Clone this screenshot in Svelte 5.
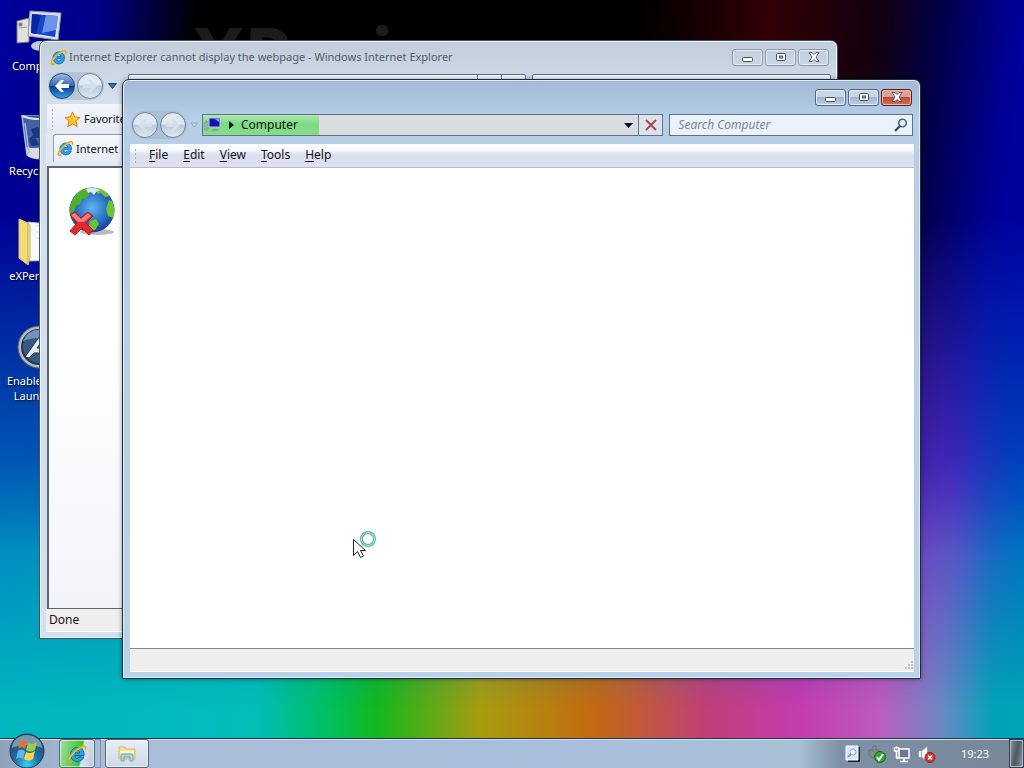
<script>
  let address = $state("Computer");
  let query = $state("");

  const shortcuts = [
    { icon: "computer", label: "Computer" },
    { icon: "bin", label: "Recycle Bin" },
    { icon: "folder", label: "eXPerience" },
    { icon: "launcher", label: "Enable Auto Launcher" },
  ];
  const menus = ["File", "Edit", "View", "Tools", "Help"];
</script>

{#snippet ieLogo(size)}
  <svg width={size} height={size} viewBox="0 0 16 16" aria-hidden="true">
    <path d="M13.500 10.300c-.8 2.300-2.700 3.700-5.200 3.700-3.300 0-5.500-2.400-5.500-5.500s2.300-5.700 5.500-5.700c3.600 0 5.600 2.500 5.400 6.400H6.300c.1 1.400.8 2.200 2 2.200.8 0 1.300-.4 1.600-1.100zM6.400 7.100h3.800c-.1-1.200-.8-1.900-1.900-1.900S6.500 5.900 6.400 7.100z" fill="#2aa5e8" stroke="#0d58a8" stroke-width=".7" />
    <path d="M14.500 4.500c.9-2.700-1-3.500-4.200-1.800C6 5 2 9.500 1.300 12.500c-.5 2.200 1 2.500 3 1.300" fill="none" stroke="#e9a414" stroke-width="1.500" />
    <path d="M13.900 3.800c.1-1.500-1.500-1.400-3.600-.2C6.500 5.700 3 9.500 2 12" fill="none" stroke="#ffe568" stroke-width=".6" />
  </svg>
{/snippet}

{#snippet captionButtons(active)}
  <div class="caption-buttons" class:active>
    <button aria-label="Minimize">
      <svg width="12" height="12" viewBox="0 0 12 12"><rect x=".500" y="6.500" width="10" height="4" rx="1" fill="#fff" stroke="#454f63" /></svg>
    </button>
    <button aria-label="Maximize">
      <svg width="12" height="12" viewBox="0 0 12 12"><rect x="1.500" y="2.500" width="9" height="7" rx="1" fill="#fff" stroke="#454f63" /><rect x="4.500" y="5" width="3" height="2" fill="#b9c8dc" stroke="#454f63" /></svg>
    </button>
    <button class="close" aria-label="Close">
      <svg width="12" height="12" viewBox="0 0 12 12"><path d="M1 1.500h3l2 2 2-2h3L8 6l3 4.500H8l-2-2-2 2H1L4 6z" fill="#fff" stroke="#454f63" stroke-width=".9" /></svg>
    </button>
  </div>
{/snippet}

{#snippet arrow(left)}
  <svg width="16" height="16" viewBox="0 0 16 16" aria-hidden="true">
    <path d={left ? "M1 8l6-6h3L7 6h8v4H7l3 4H7z" : "M15 8L9 2H6l3 4H1v4h8l-3 4h3z"} fill="currentColor" />
  </svg>
{/snippet}

<main class="desktop">
  <div class="wallpaper"></div>
  <div class="brand">eXPeri</div>

  <nav class="shortcuts">
    {#each shortcuts as item}
      <button class="shortcut">
        {#if item.icon === "computer"}
          <svg width="48" height="48" viewBox="0 0 48 48" aria-hidden="true">
            <path d="M3 13l12-3v24L3 35z" fill="#e2e2de" stroke="#777" />
            <path d="M5 15h3v3H5zM5 20l8-1" fill="#666" stroke="#999" />
            <ellipse cx="27" cy="38" rx="10" ry="5" fill="#c7cbd0" />
            <path d="M16 3l31 2-3 27-30-4z" fill="#d9dfe5" stroke="#8c97a5" />
            <path d="M18 6l26 2-3 21-24-4z" fill="#1747c8" />
            <path d="M32 7l12 1-2 14-14 3z" fill="#6c94ea" />
            <path d="M18 6l9 1-5 19-5-1z" fill="#0924a4" />
          </svg>
        {:else if item.icon === "bin"}
          <svg width="48" height="48" viewBox="0 0 48 48" aria-hidden="true">
            <path d="M8 3h36l-6 40c-8 5-20 3-25-1z" fill="#5575ad" fill-opacity=".8" stroke="#a9b9cf" stroke-width="1.500" />
            <path d="M8 3c10 4 26 4 36 0" fill="#334f86" stroke="#dce5ee" stroke-width="2" />
            <path d="M12 34l2 9c8 4 16 3 23-1l2-10c-9 3-20 4-27 2z" fill="#d9dcdd" />
            <path d="M17 16l7-2 5 6-4 5h-6l1 7-5-6 4-4zM15 28l6-3 5 7-8 1z" fill="#153a88" />
            <path d="M11 10l4 30" stroke="#a8bbdc" stroke-width="1.500" />
          </svg>
        {:else if item.icon === "folder"}
          <svg width="48" height="48" viewBox="0 0 48 48" aria-hidden="true">
            <path d="M14 4l30 3v35l-30 1z" fill="#fafafa" stroke="#c9c5b5" />
            <path d="M22 8h15M22 14h15M22 20h15" stroke="#ddd" />
            <path d="M5 1l9 4v42l-9-7z" fill="#f0dc78" stroke="#dcc46b" />
            <path d="M14 5l2 3v31l-2 8z" fill="#fff1a9" stroke="#c9ac50" />
          </svg>
        {:else}
          <svg width="48" height="48" viewBox="0 0 48 48" aria-hidden="true">
            <circle cx="25" cy="24" r="21" fill="#b5bbc1" stroke="#515b69" stroke-width="1" />
            <circle cx="25" cy="24" r="17" fill="#345985" stroke="#26364e" stroke-width="2" />
            <path d="M9 18a17 17 0 0 1 32 0c-10-4-22-4-32 0z" fill="#7193bb" />
            <path d="M11 34L28 10h7l-2 27h-6l1-7h-8l-5 5zM23 25h6l1-9z" fill="#e8edf1" stroke="#273342" />
          </svg>
        {/if}
        <span>{item.label}</span>
      </button>
    {/each}
  </nav>

  <section class="window browser" aria-label="Internet Explorer">
    <header class="titlebar">
      {@render ieLogo(17)}
      <h1>Internet Explorer cannot display the webpage - Windows Internet Explorer</h1>
      {@render captionButtons(false)}
    </header>
    <div class="navbar">
      <div class="travel">
        <button class="back" aria-label="Back">{@render arrow(true)}</button>
        <button aria-label="Forward">{@render arrow(false)}</button>
      </div>
      <svg class="chevron" width="9" height="6" viewBox="0 0 9 6" aria-hidden="true"><path d="M.5.5h8l-4 5z" fill="#2d75ab" stroke="#1b4166" /></svg>
      <div class="address">
        <span class="field"></span><button aria-label="Refresh"></button><button aria-label="Stop"></button>
      </div>
      <div class="search"></div>
    </div>
    <div class="favorites">
      <span class="grip"></span>
      <svg width="17" height="17" viewBox="0 0 18 18" aria-hidden="true"><path d="M9 1l2.300 5.300 5.700.5-4.300 3.900 1.300 5.800L9 13.500l-5 3 1.300-5.800L1 6.800l5.700-.5z" fill="#ffc12e" stroke="#d77b0c" /><path d="M9 4l1.500 3.400 3 .4" fill="none" stroke="#fff2a0" /></svg>
      <button>Favorites</button>
    </div>
    <div class="tabs">
      <button class="tab">{@render ieLogo(17)}Internet</button>
    </div>
    <div class="page">
      <svg width="50" height="50" viewBox="0 0 50 50" aria-hidden="true">
        <defs>
          <radialGradient id="sea" cx=".5" cy=".45" r=".55">
            <stop offset="0" stop-color="#62b9ee" />
            <stop offset=".6" stop-color="#2b71c4" />
            <stop offset="1" stop-color="#1a3d93" />
          </radialGradient>
        </defs>
        <ellipse cx="30" cy="46" rx="17" ry="3" fill="#bbb" />
        <circle cx="25" cy="24" r="22.500" fill="url(#sea)" />
        <path d="M4 17C8 7 15 2 22 2l-2 4 3 2-4 4-4 1-2 5-4 2-2 6-4 2c-1-4-1-7 1-11z" fill="#4fb02f" />
        <path d="M27 2c7 0 12 3 16 8l-5 1-4-4-3 1zM42 14l3 1c3 7 3 12 1 17l-5-2-2-7zM23 35l6-2 3 5-4 6-8 1z" fill="#6cc334" />
        <path d="M19 3c6-2 10-1 14 1l-4 2-2 3-3-3-3 1z" fill="#d9ecea" />
        <path d="M3 29l5-3 6 6 7-6 5 4-7 7 7 7-4 5-7-7-7 7-5-4 7-8z" fill="#e22a2c" stroke="#b5181d" />
        <path d="M4 29l4-2 6 6 7-6 3 3-7 6h-6z" fill="#f27c7c" />
      </svg>
    </div>
    <footer class="status">Done</footer>
  </section>

  <section class="window explorer" aria-label="Computer">
    <header class="titlebar">
      {@render captionButtons(true)}
    </header>
    <div class="navbar">
      <div class="travel">
        <button aria-label="Back">{@render arrow(true)}</button>
        <button aria-label="Forward">{@render arrow(false)}</button>
      </div>
      <svg class="chevron" width="9" height="6" viewBox="0 0 9 6" aria-hidden="true"><path d="M1 1h7l-3.500 4z" fill="#c5d7eb" stroke="#95abc6" /></svg>
      <div class="address">
        <div class="field">
          <svg width="18" height="16" viewBox="0 0 18 16" aria-hidden="true"><path d="M1 4h3v9H1z" fill="#9fb7b4" stroke="#7d8e97" stroke-dasharray="2 1" /><rect x="5" y="1" width="11" height="9" fill="#1414b4" stroke="#b9c3d8" /><path d="M10 1.500h5.500v4z" fill="#7898ea" /><path d="M8 12h6l1 2H8z" fill="#8b9fae" /></svg>
          <svg width="5" height="8" viewBox="0 0 5 8" aria-hidden="true"><path d="M0 0l5 4-5 4z" fill="#081808" /></svg>
          <input aria-label="Address" bind:value={address} />
          <svg width="9" height="5" viewBox="0 0 9 5" aria-hidden="true"><path d="M0 0h9L4.500 5z" fill="#0b0b33" /></svg>
        </div>
        <button aria-label="Stop">
          <svg width="12" height="12" viewBox="0 0 12 12"><path d="M1 1l10 10M11 1L1 11" stroke="#a9484e" stroke-width="2" /></svg>
        </button>
      </div>
      <div class="search">
        <input aria-label="Search Computer" placeholder="Search Computer" bind:value={query} />
        <svg width="14" height="14" viewBox="0 0 14 14" aria-hidden="true"><circle cx="8.500" cy="5" r="3.800" fill="#e8f4ff" stroke="#41648d" stroke-width="1.600" /><path d="M6 8l-5 5" stroke="#33507a" stroke-width="2.400" /></svg>
      </div>
    </div>
    <nav class="menubar">
      <span class="grip"></span>
      {#each menus as menu}
        <button><u>{menu[0]}</u>{menu.slice(1)}</button>
      {/each}
    </nav>
    <div class="content"></div>
    <footer class="status">
      <svg width="10" height="10" viewBox="0 0 10 10" aria-hidden="true"><path d="M7 1h2M4 4h2M7 4h2M1 7h2M4 7h2M7 7h2" stroke="#c6c3c0" stroke-width="2" /></svg>
    </footer>
  </section>

  <svg class="cursor" width="26" height="30" viewBox="0 0 26 30" aria-hidden="true">
    <defs>
      <linearGradient id="ring" x1="0" y1="0" x2="1" y2="1">
        <stop offset="0" stop-color="#6f9a9c" />
        <stop offset="1" stop-color="#38c9ab" />
      </linearGradient>
    </defs>
    <path d="M1.500 9.500v16l4-4 3 6 3-1.500-3-5.500h5z" fill="#fff" stroke="#1c2733" />
    <circle cx="16" cy="9" r="6.500" fill="none" stroke="url(#ring)" stroke-width="3" />
    <circle cx="16" cy="9" r="6.500" fill="none" stroke="#b9eee2" stroke-width="1" />
  </svg>

  <footer class="taskbar">
    <button class="start" aria-label="Start">
      <svg width="36" height="36" viewBox="0 0 36 36">
        <defs>
          <radialGradient id="orb" cx=".5" cy=".9" r=".85">
            <stop offset="0" stop-color="#38d3f4" />
            <stop offset=".45" stop-color="#1d6ca6" />
            <stop offset="1" stop-color="#274661" />
          </radialGradient>
        </defs>
        <circle cx="18" cy="18" r="17" fill="url(#orb)" stroke="#22384d" />
        <path d="M3 15a15 13 0 0 1 30 0c-8-4-22-4-30 0z" fill="#b2cad8" fill-opacity=".6" />
        <path d="M11 9c3-2 5-2 7 0l-2 7c-2-2-5-2-7 0z" fill="#ee6a2d" />
        <path d="M19 10c3 2 6 1 9-1l-2 8c-3 2-6 2-9 0z" fill="#9bcc43" />
        <path d="M9 18c3-2 5-1 7 0l-2 8c-3-2-5-1-7 0z" fill="#5eb8ef" />
        <path d="M17 19c3 2 6 1 9-1l-2 8c-3 2-6 2-9 0z" fill="#ffd347" />
      </svg>
    </button>
    <button class="task loading" aria-label="Internet Explorer">{@render ieLogo(20)}</button>
    <span class="stack"></span>
    <button class="task current" aria-label="Computer">
      <svg width="18" height="18" viewBox="0 0 18 18"><path d="M1 2h6l1 2h9v10H1z" fill="#f4e39a" stroke="#d5b95b" /><path d="M2 7h14" stroke="#fff6ca" stroke-width="2" /><path d="M3 16v-5q0-2 2-2h8q2 0 2 2v5h-3v-4H6v4z" fill="#a9d7e7" stroke="#6ba5bc" /></svg>
    </button>
    <div class="tray">
      <svg width="16" height="18" viewBox="0 0 16 18" aria-hidden="true"><path d="M3 2h12v15H3z" fill="#15233b" /><path d="M1 1h12v14H1z" fill="#d7e6f1" stroke="#f8fcff" /><circle cx="8" cy="7" r="3" fill="#f4faff" stroke="#8eacc8" /><path d="M3 12l3-3" stroke="#7d9dbf" stroke-width="2" /></svg>
      <svg width="18" height="18" viewBox="0 0 18 18" aria-hidden="true"><path d="M5 1h3v4h3v5l-3 3H6L3 12 1 10V5h4z" fill="#83888b" stroke="#6d7377" /><circle cx="12" cy="12" r="5.500" fill="#32a52b" stroke="#176818" /><path d="M9 12l2 3 4-6" fill="none" stroke="#fff" stroke-width="2" /></svg>
      <svg width="18" height="18" viewBox="0 0 18 18" aria-hidden="true"><path d="M6 4h10v9H6z" fill="#6a7890" stroke="#fff" stroke-width="1.500" /><path d="M11 13v3M7 16.500h8M1.500 2v4h4V2M3.500 1v3M3.500 6v7H6" fill="none" stroke="#fff" stroke-width="1.500" /></svg>
      <svg width="18" height="18" viewBox="0 0 18 18" aria-hidden="true"><path d="M1 6h2v6H1zM4 6l5-4v14l-5-4z" fill="#fff" stroke="#dbe2e8" stroke-width=".5" /><circle cx="12" cy="12.500" r="5" fill="#d8302e" stroke="#a71a1d" /><path d="M10 10.500l4 4M14 10.500l-4 4" stroke="#fff" stroke-width="1.600" /></svg>
    </div>
    <time>19:23</time>
    <button class="peek" aria-label="Show desktop"></button>
  </footer>
</main>

<style>
  :global(body) { margin:0; }
  .desktop { position:relative; height:100vh; overflow:hidden; display:flex; flex-direction:column; font:11px/16px "Noto Sans","Open Sans",sans-serif; color:#111; }
  button, input { font:inherit; color:inherit; padding:0; margin:0; border:0; background:none; }
  svg { display:block; flex-shrink:0; }

  .desktop { background:linear-gradient(90deg,#00b6c0 0%,#00bdb8 25%,#00c060 32%,#14b81c 37%,#a89c10 47%,#c46a10 58%,#c04078 69%,#c33cb0 78%,#bb5cbc 86%,#6a88c4 92%,#00a4b8 97%); }
  .wallpaper { position:absolute; inset:0; }
  .wallpaper::before { content:""; position:absolute; inset:0; background:linear-gradient(86deg,#0078c0 0%,#0078c0 60%,#5a28b8 84%,#5a34c8 90%,#0058c8 96%); mask-image:linear-gradient(#000 60%,transparent 92%); }
  .wallpaper::after { content:""; position:absolute; inset:0; background:linear-gradient(96deg,#00009c 0%,#000088 9%,#000 18%,#000 58%,#300004 70%,#120010 80%,#000050 86%,#000098 92%,#0000a8 100%); mask-image:linear-gradient(#000 28%,transparent 72%); }
  .brand { position:absolute; left:148px; top:13px; font:bold 76px/80px "Noto Sans",sans-serif; color:#1c1c1c; }

  .shortcuts { position:relative; flex:1; display:flex; flex-direction:column; align-items:flex-start; padding-top:8px; }
  .shortcut { width:76px; height:105px; display:flex; flex-direction:column; align-items:center; color:#fff; line-height:15px; text-shadow:1px 1px 2px #000; }
  .shortcut span { margin-top:2px; }

  .window { position:absolute; display:flex; flex-direction:column; box-sizing:border-box; border:1px solid #1d2c3a; border-radius:7px 7px 1px 1px; padding:0 6px 6px; }
  .browser { left:39px; top:40px; right:186px; bottom:129px; border-color:#45535f; background:linear-gradient(#c1cdda,#d5e0ec 60px,#d3e0ef); box-shadow:inset 0 0 0 1px #eef4fa; }
  .explorer { left:122px; top:79px; right:103px; bottom:89px; font-size:12px; background:linear-gradient(#a5b9d6,#a8c1dc 16px,#b8cfe9 40px,#b9cde4 90px,#b8d3e9); box-shadow:inset 0 0 0 1px #e1edf8,0 0 5px #0006; }

  .titlebar { height:30px; display:flex; align-items:center; gap:2px; padding-left:4px; }
  .browser .titlebar { padding-top:2px; height:28px; }
  h1 { flex:1; margin:0; font-size:11px; font-weight:400; color:#4f5c68; white-space:nowrap; }
  .caption-buttons { display:flex; gap:2px; margin-left:auto; margin-right:2px; }
  .caption-buttons.active { margin-top:4px; }
  .caption-buttons button { width:31px; height:17px; display:grid; place-items:center; box-sizing:border-box; border:1px solid #8a97a8; border-radius:3px; box-shadow:inset 0 0 0 1px #e5edf5; }
  .caption-buttons.active button { border-color:#53667f; background:linear-gradient(#c7d7e9 45%,#9fb6d0 50%,#b8cee5); }
  .caption-buttons.active .close { border-color:#5b1f22; background:linear-gradient(#e1a093 45%,#c04a37 50%,#d0705a); box-shadow:inset 0 0 0 1px #eab8ab; }

  .navbar { height:30px; display:flex; align-items:center; padding-bottom:4px; }
  .browser .navbar { padding-bottom:3px; }
  .travel { display:flex; gap:2px; padding:1px; margin-left:2px; border-radius:14px; background:#9fb3ca88; }
  .travel button { width:26px; height:26px; display:grid; place-items:center; box-sizing:border-box; border:1px solid #75869a; border-radius:50%; background:linear-gradient(#e0e9f2 45%,#b9c9da 50%,#dde8f3); color:#d3dfec; }
  .travel .back { border-color:#284a7a; background:linear-gradient(#a0bbe2,#3167b1 48%,#0d3a8a 52%,#30a0e8); color:#fff; }
  .chevron { margin:0 3px; }
  .browser .chevron { margin-right:11px; margin-left:4px; }
  .address { flex:2; display:flex; height:22px; margin-right:6px; border:1px solid #5d7288; box-sizing:border-box; }
  .address .field { flex:1; display:flex; align-items:center; }
  .address button { width:24px; display:grid; place-items:center; border-left:1px solid #5d7288; }
  .search { flex:1; display:flex; align-items:center; height:22px; box-sizing:border-box; border:1px solid #5d7288; }
  .browser .address, .browser .search { height:24px; background:#f7fafc; border-radius:2px; }
  .browser .address { flex:4; }
  .browser .search { flex:3; }
  .explorer .search { padding:0 4px 0 8px; margin-right:1px; background:#eaf2fb; }
  .explorer .field { gap:7px; padding:0 5px 0 1px; background:linear-gradient(90deg,#7ddb8400 0 116px,#dadddf 116px),linear-gradient(#b0e8b2,#7ddb84 45%,#86dd8c); }
  .explorer .address button { background:#dce3ed; }
  input { flex:1; min-width:0; outline:0; }
  .search input::placeholder { color:#7d858d; opacity:1; font-style:italic; }

  .grip { width:3px; align-self:stretch; margin:4px 0 4px 4px; background:radial-gradient(circle,#a6afbe 1px,transparent 1px) 0 0/3px 4px; }
  .favorites { height:30px; display:flex; align-items:center; gap:3px; background:linear-gradient(#f3f6fb,#e3e9f4); margin-left:1px; }
  .favorites svg { margin-left:7px; }
  .tabs { height:28px; display:flex; align-items:flex-end; padding:0 0 4px 7px; background:#e3e9f3; }
  .tab { height:28px; box-sizing:border-box; display:flex; align-items:center; gap:2px; padding:0 120px 0 3px; border:1px solid #8b9bb0; border-bottom:0; border-radius:3px 3px 0 0; background:linear-gradient(#f7f9fd,#e4ebf7); }
  .page { flex:1; padding:18px; border:1px solid #5d6670; border-width:2px 1px 1px 2px; background:linear-gradient(#fff,#fff 40%,#f3f4fa); margin-left:1px; }
  .status { height:22px; display:flex; align-items:center; background:#f0eeed; padding-left:3px; border-bottom:1px solid #fff; }
  .browser .status { font-size:12px; }

  .menubar { height:23px; display:flex; align-items:center; margin-left:1px; background:linear-gradient(#fafbff 0 6px,#e9edf8 8px,#dbe0ef 11px,#dde1ef); border-bottom:1px solid #b4bccb; }
  .menubar button { margin-left:15px; line-height:18px; padding-bottom:2px; }
  .menubar .grip + button { margin-left:12px; }
  .menubar u { text-underline-offset:2px; }
  .content { flex:1; margin-left:1px; background:#fff; }
  .explorer .status { margin-left:1px; justify-content:flex-end; align-items:flex-end; border-top:1px solid #808890; }

  .cursor { position:absolute; left:352px; top:530px; }

  .taskbar { position:relative; height:30px; display:flex; align-items:stretch; box-sizing:border-box; border-top:1px solid #263648; box-shadow:inset 0 1px #d2dfec; background:linear-gradient(90deg,#8fa2ba,#a9bcd8 8%,#a9bfdc 60%,#a9c0d6 78%,#7e90a5 82%,#778798); }
  .start { width:36px; margin:-6px 14px 0 9px; display:block; align-self:flex-start; }
  .task { width:36px; display:grid; place-items:center; box-sizing:border-box; border:1px solid #51677d; border-radius:3px; box-shadow:inset 0 0 0 1px #ffffff90; }
  .loading { background:linear-gradient(100deg,#a8dca5,#2fcb2f 60%,#d7e3ec 65%,#bccbdc); }
  .stack { width:5px; margin-right:4px; border:1px solid #7e91aa; border-left:0; }
  .current { width:44px; background:linear-gradient(#e9edf5,#cfd9e8); }
  .tray { display:flex; align-items:center; gap:7px; margin-left:auto; }
  time { align-self:center; margin:0 20px 0 25px; color:#fff; }
  .peek { width:15px; border:1px solid #37444f; background:linear-gradient(100deg,#8d98a2,#4b5862 50%,#8e9aa4); box-shadow:inset 0 0 0 1px #adb8c3; }
</style>
